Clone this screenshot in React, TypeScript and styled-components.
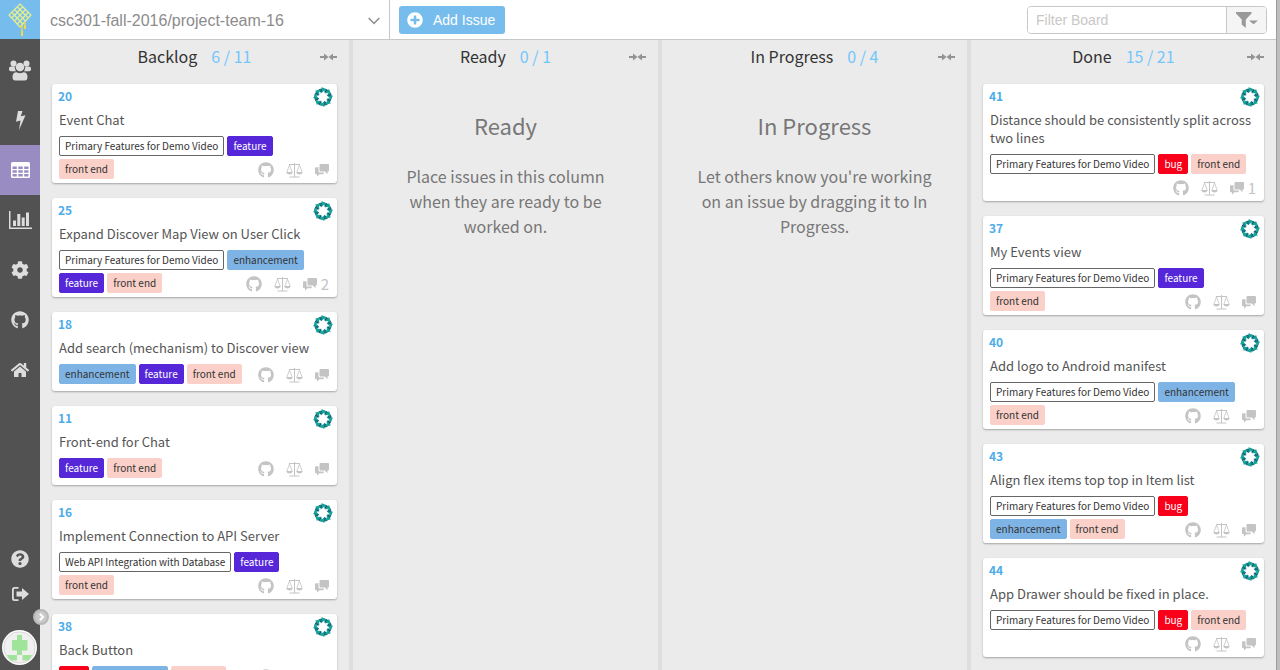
import React from 'react';
import styled, { createGlobalStyle } from 'styled-components';
import { FaCog, FaGithub, FaHome, FaQuestionCircle, FaPlusCircle } from 'react-icons/fa';

const GlobalStyle = createGlobalStyle`
  *, *::before, *::after { box-sizing: border-box; }
  body { margin: 0; background: #ebebeb; color: #333; font-family: "Noto Sans CJK SC", "Noto Sans", sans-serif; overflow: hidden; }
  button, input { font: inherit; margin: 0; }
  h2, h3, p { margin: 0; padding: 0; font-weight: 400; }
`;

const Shell = styled.div`
  display: grid;
  grid-template-columns: 40px minmax(0, 1fr);
  height: 100vh;
  border-right: 3px solid #bebebe;
`;

const Sidebar = styled.nav`
  display: flex;
  flex-direction: column;
  background: #525252;
  position: relative;
  padding-bottom: 5px;
`;

const Logo = styled.a`
  display: flex;
  justify-content: center;
  height: 39px;
  padding-top: 3px;
  margin-bottom: 6px;
  background: #76bdee;
`;

const NavLink = styled.a<{ $active?: boolean; $short?: boolean }>`
  display: flex;
  align-items: center;
  justify-content: center;
  height: ${p => (p.$short ? 35 : 50)}px;
  color: ${p => (p.$active ? '#fff' : '#ddd')};
  background: ${p => (p.$active ? '#988cc3' : 'transparent')};
`;

const Spacer = styled.div`
  flex: 1;
`;

const AvatarLink = styled.a`
  display: flex;
  padding-left: 2px;
  margin-top: 19px;
`;

const Expand = styled.button`
  position: absolute;
  right: -9px;
  bottom: 45px;
  display: flex;
  align-items: center;
  justify-content: center;
  width: 16px;
  height: 16px;
  padding: 0;
  border: 2px solid #b8b8b8;
  border-radius: 50%;
  background: #cacaca;
  color: #fff;
  z-index: 2;
`;

const Main = styled.main`
  display: flex;
  flex-direction: column;
  min-width: 0;
  min-height: 0;
  border-right: 1px solid #9c9c9c;
`;

const TopBar = styled.header`
  display: flex;
  align-items: center;
  flex: none;
  height: 40px;
  padding-right: 9px;
  background: #fff;
  border-bottom: 1px solid #c8c8c8;
  font-family: "Liberation Sans", Arial, sans-serif;
`;

const RepoPicker = styled.button`
  display: flex;
  align-items: center;
  justify-content: space-between;
  width: 350px;
  height: 39px;
  padding: 2px 9px 0 10px;
  border: 0;
  border-right: 1px solid #c8c8c8;
  background: #fff;
  color: #8c8c8c;
  font-size: 16px;
`;

const AddButton = styled.button`
  display: flex;
  align-items: center;
  gap: 10px;
  height: 28px;
  margin-left: 9px;
  padding: 0 10px 0 8px;
  border: 0;
  border-radius: 3px;
  background: #76bdee;
  color: #fff;
  font-size: 14px;
`;

const Filter = styled.form`
  display: flex;
  width: 240px;
  height: 28px;
  margin-left: auto;
  border: 1px solid #c8c8c8;
  border-radius: 4px;
  overflow: hidden;
`;

const FilterInput = styled.input`
  flex: 1;
  min-width: 0;
  padding: 0 8px;
  border: 0;
  font-size: 14px;
  &::placeholder { color: #c8c8c8; }
`;

const FilterButton = styled.button`
  display: flex;
  align-items: center;
  justify-content: center;
  width: 40px;
  padding: 0;
  border: 0;
  border-left: 1px solid #c8c8c8;
  background: #f5f5f5;
  color: #999;
`;

const Board = styled.div`
  display: grid;
  grid-template-columns: minmax(0, 313fr) repeat(2, minmax(0, 309fr)) minmax(0, 305fr);
  flex: 1;
  min-height: 0;
`;

const ColumnBox = styled.section`
  min-width: 0;
  overflow: hidden;
  padding: 0 12px;
  border-right: 4px solid #dedede;
  &:last-child { border-right: 0; }
`;

const ColumnHeader = styled.header`
  display: flex;
  align-items: center;
  height: 44px;
  padding-bottom: 11px;
`;

const ColumnTitle = styled.h2`
  flex: 1;
  padding-left: 17px;
  text-align: center;
  font-size: 16px;
  line-height: 23px;
`;

const Count = styled.span`
  margin-left: 14px;
  color: #74c6fb;
`;

const Collapse = styled.button`
  display: flex;
  padding: 0;
  border: 0;
  background: none;
  color: #939393;
`;

const Placeholder = styled.div`
  max-width: 240px;
  margin: 0 auto;
  padding-top: 25px;
  text-align: center;
  color: #777;
`;

const PlaceholderTitle = styled.h3`
  margin-bottom: 23px;
  font-size: 22px;
  line-height: 32px;
`;

const PlaceholderText = styled.p`
  font-size: 16px;
  line-height: 25px;
`;

const CardList = styled.div`
  display: flex;
  flex-direction: column;
  gap: 15px;
`;

const CardBox = styled.article`
  flex: none;
  min-height: 79px;
  padding: 3px 7px 0;
  border-radius: 3px;
  background: #fff;
  box-shadow: 0 1px 2px rgba(0, 0, 0, 0.3);
`;

const CardTop = styled.div`
  display: flex;
  justify-content: space-between;
  height: 24px;
  margin: 0 -3px 0 -1px;
`;

const IssueLink = styled.a`
  color: #4dacea;
  font-size: 12px;
  font-weight: 700;
  line-height: 18px;
  text-decoration: none;
`;

const CardTitle = styled.h3`
  margin-bottom: 7px;
  color: #555;
  font-size: 13px;
  line-height: 18px;
`;

const Labels = styled.div`
  display: flow-root;
  margin-right: -1px;
`;

const tones = {
  milestone: 'background:#fff;color:#333;border-color:#666;',
  feature: 'background:#5627d9;color:#fff;border-color:#5627d9;',
  enhancement: 'background:#7eb3e5;color:#333;border-color:#7eb3e5;',
  frontend: 'background:#fad0c8;color:#333;border-color:#fad0c8;',
  bug: 'background:#f8001a;color:#fff;border-color:#f8001a;',
};
type Tone = keyof typeof tones;

const Label = styled.span<{ $tone: Tone }>`
  float: left;
  height: 20px;
  margin: 0 3px 3px 0;
  padding: 0 5px;
  border: 1px solid;
  border-radius: 2px;
  font-size: 10px;
  line-height: 18px;
  white-space: nowrap;
  ${p => tones[p.$tone]}
`;

const Meta = styled.div`
  float: right;
  display: flex;
  align-items: center;
  gap: 12px;
  height: 22px;
  margin: 0 2px 2px 0;
  color: #c4c4c4;
  font-size: 16px;
`;

const Comments = styled.span`
  display: flex;
  align-items: center;
  gap: 4px;
  font-size: 15px;
  line-height: 22px;
`;

const LogoIcon = () => (
  <svg width="24" height="34" viewBox="0 0 24 34" fill="none" stroke="#e6ef8c" strokeWidth="1.200">
    <path d="M12 1L23 12 12 24 1 12Z M9.250 3.750L20.250 15 M6.500 6.500L17.500 18 M3.750 9.250L14.750 21 M14.750 3.750L3.750 15 M17.500 6.500L6.500 18 M20.250 9.250L9.250 21" />
    <path d="M14 22v10M17 19v6M12 24l2 -2" stroke="#f0d94c" />
    <path d="M14 28v5M17 22v4" stroke="#f0d94c" strokeWidth="2" />
  </svg>
);

const UsersIcon = () => (
  <svg width="22" height="21" viewBox="0 0 22 21" fill="currentColor">
    <circle cx="4.500" cy="3.500" r="3" />
    <circle cx="17.500" cy="3.500" r="3" />
    <path d="M0 8.500Q0 6.500 2 6.500H5.800Q5.600 9.800 7 11.300H2Q0 11.300 0 9.500zM22 8.500Q22 6.500 20 6.500H16.200Q16.400 9.800 15 11.300H20Q22 11.300 22 9.500z" />
    <circle cx="11" cy="7" r="4.300" />
    <path d="M3.500 17Q3.500 12.300 7.500 12.300Q11 14.300 14.500 12.300Q18.500 12.300 18.500 17Q18.500 20.500 15.500 20.500H6.500Q3.500 20.500 3.500 17Z" />
  </svg>
);

const BoltIcon = () => (
  <svg width="11" height="19" viewBox="0 0 11 19" fill="currentColor">
    <path d="M3 0H7.500L5.800 5.300 10.500 4.200 4 19 5.500 9.500 1 10.700Z" />
  </svg>
);

const BoardIcon = () => (
  <svg width="19" height="16" viewBox="0 0 19 16">
    <rect width="19" height="16" rx="1.500" fill="#fff" />
    <path d="M1.500 4.500h4.300v2.500H1.500zM7.300 4.500h4.400v2.500H7.300zM13.200 4.500h4.300v2.500h-4.300zM1.500 8.300h4.300v2.500H1.500zM7.300 8.300h4.400v2.500H7.300zM13.200 8.300h4.300v2.500h-4.300zM1.500 12.100h4.300v2.400H1.500zM7.300 12.100h4.400v2.400H7.300zM13.200 12.100h4.300v2.400h-4.300z" fill="#988cc3" />
  </svg>
);

const ChartIcon = () => (
  <svg width="23" height="18" viewBox="0 0 23 18" fill="currentColor">
    <path d="M0 0h1.500v16.500H23V18H0zM4 9.500h3V15H4zM8.300 3h3v12h-3zM12.700 6.500h3V15h-3zM17 1.500h3V15h-3z" />
  </svg>
);

const SignOutIcon = () => (
  <svg width="18" height="14" viewBox="0 0 18 14" fill="currentColor">
    <path d="M7.500 0v1.800H4Q2.800 1.800 2.800 3v8q0 1.200 1.200 1.200h3.500V14H3.500Q1 14 1 11.500v-9Q1 0 3.500 0z" />
    <path d="M5.500 4.500H11V1L18 7l-7 6V9.500H5.500z" />
  </svg>
);

const AvatarIcon = () => (
  <svg width="35" height="35" viewBox="0 0 35 35">
    <circle cx="17.500" cy="17.500" r="17.500" fill="#fdfdfd" />
    <circle cx="17.500" cy="17.500" r="15.700" fill="#f0f0f0" stroke="#ccc" strokeWidth=".7" />
    <path d="M10 10h5V5h5v5h5.500v10.500H20V25h-5v-4.500h-5zM5 25h10v5.500H9Q6.500 28.500 5 25zM20.500 25H30q-1.500 3.500-4 5.500h-5.500z" fill="#9fe49a" />
  </svg>
);

const Assignee = () => (
  <svg width="20" height="20" viewBox="-10 -10 20 20" aria-label="Assignee">
    <circle r="6.500" fill="none" stroke="#14507c" strokeWidth="4.400" />
    {[0, 45, 90, 135, 180, 225, 270, 315].map(a => (
      <g key={a} transform={`rotate(${a})`}>
        <path d="M-1.300 -10L4 -6.900L-1.600 -4.300Z" fill="#13a793" />
        <path d="M-1.500 -4L1.300 -6.600L1.800 -3.800Z" fill="#fff" />
      </g>
    ))}
  </svg>
);

const CollapseIcon = () => (
  <svg width="17" height="8" viewBox="0 0 17 8" fill="currentColor">
    <path d="M0 3h4V.5L8.500 4 4 7.500V5H0zM17 3h-4V.5L8.500 4l4.500 3.500V5H17z" />
  </svg>
);

const ScaleIcon = () => (
  <svg width="17" height="15" viewBox="0 0 17 15" fill="none" stroke="currentColor">
    <path d="M3 1.500h11M8.500 0v14M3.500 14h10" />
    <path d="M3.500 2L.8 9.300M3.500 2l2.700 7.300M13.500 2l-2.700 7.300M13.500 2l2.700 7.300" strokeWidth=".8" />
    <path d="M.2 9h6.600Q6 11.500 3.500 11.500T.2 9zM10.200 9h6.600q-.8 2.500-3.300 2.500T10.200 9z" fill="currentColor" stroke="none" />
  </svg>
);

const CommentsIcon = () => (
  <svg width="14" height="13" viewBox="0 0 14 13" fill="currentColor">
    <path d="M5.500 0h7.500q1 0 1 1v5.500q0 1-1 1h-.5v2.700L9.800 7.500H5.500q-1 0-1-1V1q0-1 1-1z" />
    <path d="M1 3.200h2.500V7q0 1.500 1.500 1.500h3.800v.7q0 1-1 1H4.300L2 12.800v-2.600H1q-1 0-1-1v-5q0-1 1-1z" />
  </svg>
);

const FunnelIcon = () => (
  <svg width="22" height="16" viewBox="0 0 22 16" fill="currentColor">
    <path d="M0 0h15.500v1.500L9.800 7.500V16L5.700 12.500v-5L0 1.500zM13 8.500h9l-4.500 3.800z" />
  </svg>
);

const ChevronDown = () => (
  <svg width="12" height="8" viewBox="0 0 12 8" fill="none" stroke="currentColor" strokeWidth="1.500">
    <path d="M.7 1L6 6.500 11.300 1" />
  </svg>
);

const ChevronRight = () => (
  <svg width="5" height="8" viewBox="0 0 5 8" fill="none" stroke="currentColor" strokeWidth="2">
    <path d="M.8 .8L4 4 .8 7.200" />
  </svg>
);

type Issue = { n: number; title: string; labels: Tone[]; milestone?: string; comments?: number };
const names: Record<Tone, string> = {
  milestone: 'Primary Features for Demo Video',
  feature: 'feature',
  enhancement: 'enhancement',
  frontend: 'front end',
  bug: 'bug',
};

const backlog: Issue[] = [
  { n: 20, title: 'Event Chat', labels: ['milestone', 'feature', 'frontend'] },
  { n: 25, title: 'Expand Discover Map View on User Click', labels: ['milestone', 'enhancement', 'feature', 'frontend'], comments: 2 },
  { n: 18, title: 'Add search (mechanism) to Discover view', labels: ['enhancement', 'feature', 'frontend'] },
  { n: 11, title: 'Front-end for Chat', labels: ['feature', 'frontend'] },
  { n: 16, title: 'Implement Connection to API Server', labels: ['milestone', 'feature', 'frontend'], milestone: 'Web API Integration with Database' },
  { n: 38, title: 'Back Button', labels: ['bug', 'enhancement', 'frontend'] },
];
const done: Issue[] = [
  { n: 41, title: 'Distance should be consistently split across two lines', labels: ['milestone', 'bug', 'frontend'], comments: 1 },
  { n: 37, title: 'My Events view', labels: ['milestone', 'feature', 'frontend'] },
  { n: 40, title: 'Add logo to Android manifest', labels: ['milestone', 'enhancement', 'frontend'] },
  { n: 43, title: 'Align flex items top top in Item list', labels: ['milestone', 'bug', 'enhancement', 'frontend'] },
  { n: 44, title: 'App Drawer should be fixed in place.', labels: ['milestone', 'bug', 'frontend'] },
];

const Card = ({ issue }: { issue: Issue }) => (
  <CardBox>
    <CardTop>
      <IssueLink href="#">{issue.n}</IssueLink>
      <Assignee />
    </CardTop>
    <CardTitle>{issue.title}</CardTitle>
    <Labels>
      {issue.labels.map(l => (
        <Label key={l} $tone={l}>{l === 'milestone' && issue.milestone ? issue.milestone : names[l]}</Label>
      ))}
      <Meta>
        <FaGithub />
        <ScaleIcon />
        <Comments><CommentsIcon />{issue.comments}</Comments>
      </Meta>
    </Labels>
  </CardBox>
);

const Column = ({ title, count, children }: { title: string; count: string; children: React.ReactNode }) => (
  <ColumnBox>
    <ColumnHeader>
      <ColumnTitle>{title}<Count>{count}</Count></ColumnTitle>
      <Collapse aria-label={`Collapse ${title}`}><CollapseIcon /></Collapse>
    </ColumnHeader>
    {children}
  </ColumnBox>
);

export default function App() {
  return (
    <>
      <GlobalStyle />
      <Shell>
        <Sidebar>
          <Logo href="#" aria-label="Home"><LogoIcon /></Logo>
          <NavLink href="#" aria-label="Team"><UsersIcon /></NavLink>
          <NavLink href="#" aria-label="Activity"><BoltIcon /></NavLink>
          <NavLink href="#" aria-label="Board" $active><BoardIcon /></NavLink>
          <NavLink href="#" aria-label="Reports"><ChartIcon /></NavLink>
          <NavLink href="#" aria-label="Settings"><FaCog size={18} /></NavLink>
          <NavLink href="#" aria-label="GitHub"><FaGithub size={18} /></NavLink>
          <NavLink href="#" aria-label="Dashboard"><FaHome size={18} /></NavLink>
          <Spacer />
          <NavLink href="#" aria-label="Help" $short><FaQuestionCircle size={18} /></NavLink>
          <NavLink href="#" aria-label="Sign out" $short><SignOutIcon /></NavLink>
          <AvatarLink href="#" aria-label="Profile"><AvatarIcon /></AvatarLink>
          <Expand aria-label="Expand menu"><ChevronRight /></Expand>
        </Sidebar>
        <Main>
          <TopBar>
            <RepoPicker>csc301-fall-2016/project-team-16<ChevronDown /></RepoPicker>
            <AddButton><FaPlusCircle size={16} />Add Issue</AddButton>
            <Filter>
              <FilterInput aria-label="Filter Board" placeholder="Filter Board" />
              <FilterButton type="button" aria-label="Filters"><FunnelIcon /></FilterButton>
            </Filter>
          </TopBar>
          <Board>
            <Column title="Backlog" count="6 / 11">
              <CardList>{backlog.map(i => <Card key={i.n} issue={i} />)}</CardList>
            </Column>
            <Column title="Ready" count="0 / 1">
              <Placeholder>
                <PlaceholderTitle>Ready</PlaceholderTitle>
                <PlaceholderText>Place issues in this column when they are ready to be worked on.</PlaceholderText>
              </Placeholder>
            </Column>
            <Column title="In Progress" count="0 / 4">
              <Placeholder>
                <PlaceholderTitle>In Progress</PlaceholderTitle>
                <PlaceholderText>Let others know you're working on an issue by dragging it to In Progress.</PlaceholderText>
              </Placeholder>
            </Column>
            <Column title="Done" count="15 / 21">
              <CardList>{done.map(i => <Card key={i.n} issue={i} />)}</CardList>
            </Column>
          </Board>
        </Main>
      </Shell>
    </>
  );
}
